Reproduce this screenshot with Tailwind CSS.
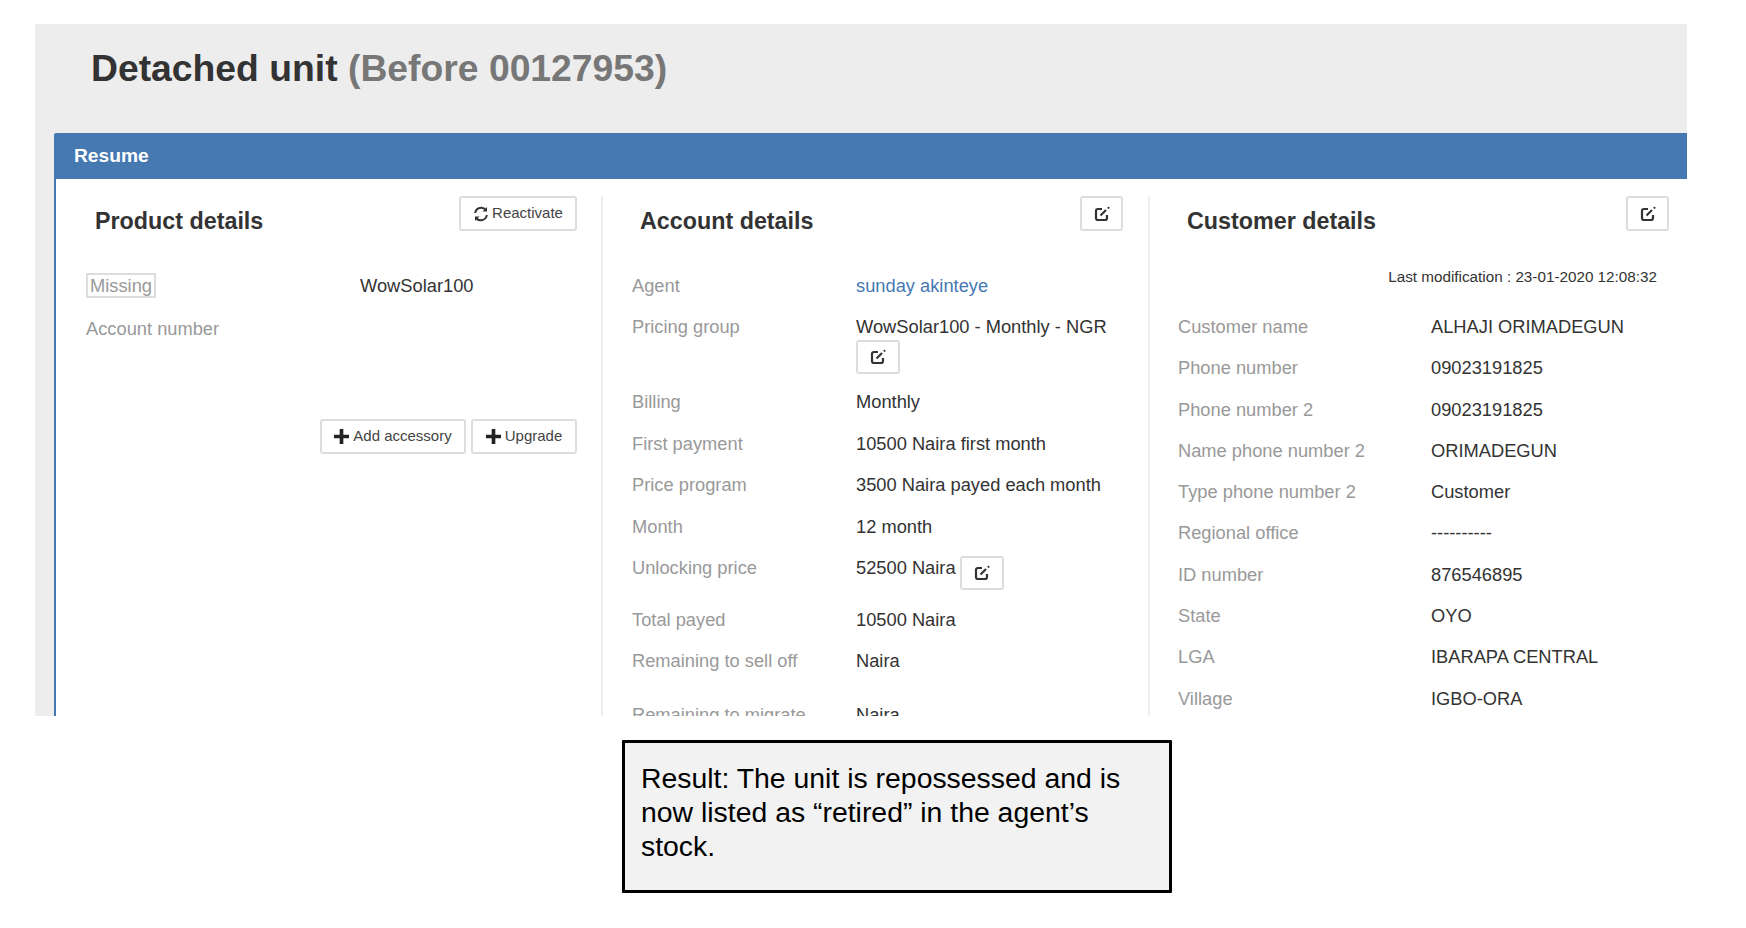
<!DOCTYPE html>
<html>
<head>
<meta charset="utf-8">
<script src="https://cdn.jsdelivr.net/npm/@tailwindcss/browser@4"></script>
</head>
<body class="bg-white font-['Liberation_Sans',Arial,sans-serif]">
<div class="w-[1746px] h-[928px] pt-[24px] pl-[35px] pr-[59px] overflow-hidden">
  <div class="h-[692px] bg-[#ededed] overflow-hidden pl-[19px]">
    <h1 class="h-[109px] pl-[37px] pt-[22px] text-[37.3px] leading-[44px] font-bold text-[#333]">Detached unit <span class="text-[#777]">(Before 00127953)</span></h1>
    <div class="h-[600px] bg-white border-l-2 border-[#4679b2] rounded-tl-[3px]">
      <div class="h-[46px] -ml-[2px] bg-[#4679b2] rounded-tl-[3px] pl-[20px] flex items-center text-white text-[19.2px] font-bold">Resume</div>
      <div class="grid grid-cols-[545px_547px_auto] pt-[17px] h-[537px] text-[18.3px]">

        <!-- Product -->
        <section class="pl-[30px] pr-[24px]">
          <div class="flex justify-between h-[77px] pl-[9px]">
            <h2 class="text-[23.3px] font-bold text-[#333] leading-[28px] pt-[11px]">Product details</h2>
            <button class="h-[35px] w-[118px] border-2 border-[#ddd] rounded-[3px] flex items-center justify-center gap-[3px] text-[15px] text-[#444]">
              <svg class="w-[16px] h-[16px]" viewBox="0 0 16 16" fill="none" stroke="#333" stroke-width="2"><path d="M2.200 7A6 6 0 0 1 13 4.200"/><path d="M13.800 9A6 6 0 0 1 3 11.800"/><path d="M14 1v4.500H9.500z" fill="#333" stroke="none"/><path d="M2 15v-4.500h4.500z" fill="#333" stroke="none"/></svg>
              Reactivate
            </button>
          </div>
          <div class="flex items-center h-[25px]">
            <span class="w-[274px] shrink-0"><span class="inline-block h-[25px] leading-[22px] border-2 border-[#ddd] px-[2px] text-[#999]">Missing</span></span>
            <span class="text-[#333]">WowSolar100</span>
          </div>
          <div class="mt-[19px] h-[24px] leading-[24px] text-[#999]">Account number</div>
          <div class="mt-[78px] flex justify-end gap-[5px]">
            <button class="h-[35px] w-[146px] border-2 border-[#ddd] rounded-[3px] flex items-center justify-center gap-[4px] text-[15px] text-[#444]">
              <svg class="w-[15px] h-[15px]" viewBox="0 0 14 14" fill="#222"><path d="M5.300 0h3.400v5.300H14v3.400H8.700V14H5.300V8.700H0V5.300h5.300z"/></svg>
              Add accessory
            </button>
            <button class="h-[35px] w-[106px] border-2 border-[#ddd] rounded-[3px] flex items-center justify-center gap-[4px] text-[15px] text-[#444]">
              <svg class="w-[15px] h-[15px]" viewBox="0 0 14 14" fill="#222"><path d="M5.300 0h3.400v5.300H14v3.400H8.700V14H5.300V8.700H0V5.300h5.300z"/></svg>
              Upgrade
            </button>
          </div>
        </section>

        <!-- Account -->
        <section class="border-l-2 border-[#eee] pl-[29px] pr-[25px] overflow-hidden">
          <div class="flex justify-between h-[78px] pl-[8px]">
            <h2 class="text-[23.3px] font-bold text-[#333] leading-[28px] pt-[11px]">Account details</h2>
            <button class="h-[35px] w-[43px] border-2 border-[#ddd] rounded-[3px] flex items-center justify-center">
              <svg class="w-[16px] h-[16px]" viewBox="0 0 16 16" fill="none" stroke="#333" stroke-width="2.200"><path d="M8 3H4a2 2 0 0 0-2 2v7a2 2 0 0 0 2 2h7a2 2 0 0 0 2-2V9"/><path d="M6.500 9.500L12 4"/><circle cx="14.500" cy="1.800" r="1.100" fill="#333" stroke="none"/></svg>
            </button>
          </div>
          <div class="flex h-[41px] leading-[24px]"><span class="w-[224px] text-[#999]">Agent</span><a class="text-[#4679b2]">sunday akinteye</a></div>
          <div class="flex h-[75px] leading-[24px]"><span class="w-[224px] shrink-0 text-[#999]">Pricing group</span>
            <div class="text-[#333]">WowSolar100 - Monthly - NGR
              <button class="h-[34px] w-[44px] mt-[1px] border-2 border-[#ddd] rounded-[3px] flex items-center justify-center">
                <svg class="w-[16px] h-[16px]" viewBox="0 0 16 16" fill="none" stroke="#333" stroke-width="2.200"><path d="M8 3H4a2 2 0 0 0-2 2v7a2 2 0 0 0 2 2h7a2 2 0 0 0 2-2V9"/><path d="M6.500 9.500L12 4"/><circle cx="14.500" cy="1.800" r="1.100" fill="#333" stroke="none"/></svg>
              </button>
            </div>
          </div>
          <div class="flex h-[41.500px] leading-[24px]"><span class="w-[224px] text-[#999]">Billing</span><span class="text-[#333]">Monthly</span></div>
          <div class="flex h-[41.500px] leading-[24px]"><span class="w-[224px] text-[#999]">First payment</span><span class="text-[#333]">10500 Naira first month</span></div>
          <div class="flex h-[41.500px] leading-[24px]"><span class="w-[224px] text-[#999]">Price program</span><span class="text-[#333]">3500 Naira payed each month</span></div>
          <div class="flex h-[41px] leading-[24px]"><span class="w-[224px] text-[#999]">Month</span><span class="text-[#333]">12 month</span></div>
          <div class="flex h-[52px] leading-[24px]"><span class="w-[224px] text-[#999]">Unlocking price</span><span class="text-[#333]">52500 Naira</span>
            <button class="h-[34px] w-[44px] ml-[4px] border-2 border-[#ddd] rounded-[3px] flex items-center justify-center">
              <svg class="w-[16px] h-[16px]" viewBox="0 0 16 16" fill="none" stroke="#333" stroke-width="2.200"><path d="M8 3H4a2 2 0 0 0-2 2v7a2 2 0 0 0 2 2h7a2 2 0 0 0 2-2V9"/><path d="M6.500 9.500L12 4"/><circle cx="14.500" cy="1.800" r="1.100" fill="#333" stroke="none"/></svg>
            </button>
          </div>
          <div class="flex h-[41px] leading-[24px]"><span class="w-[224px] text-[#999]">Total payed</span><span class="text-[#333]">10500 Naira</span></div>
          <div class="flex h-[54px] leading-[24px]"><span class="w-[224px] text-[#999]">Remaining to sell off</span><span class="text-[#333]">Naira</span></div>
          <div class="flex h-[41px] leading-[24px]"><span class="w-[224px] text-[#999]">Remaining to migrate</span><span class="text-[#333]">Naira</span></div>
        </section>

        <!-- Customer -->
        <section class="border-l-2 border-[#eee] pl-[28px] pr-[18px] overflow-hidden">
          <div class="flex justify-between h-[78px] pl-[9px]">
            <h2 class="text-[23.3px] font-bold text-[#333] leading-[28px] pt-[11px]">Customer details</h2>
            <button class="h-[35px] w-[43px] border-2 border-[#ddd] rounded-[3px] flex items-center justify-center">
              <svg class="w-[16px] h-[16px]" viewBox="0 0 16 16" fill="none" stroke="#333" stroke-width="2.200"><path d="M8 3H4a2 2 0 0 0-2 2v7a2 2 0 0 0 2 2h7a2 2 0 0 0 2-2V9"/><path d="M6.500 9.500L12 4"/><circle cx="14.500" cy="1.800" r="1.100" fill="#333" stroke="none"/></svg>
            </button>
          </div>
          <div class="h-[38px] pr-[12px] text-right text-[15.250px] leading-[20px] text-[#333] -mt-[7px] mb-[10px]">Last modification : 23-01-2020 12:08:32</div>
          <div class="flex h-[41.300px] leading-[24px]"><span class="w-[253px] text-[#999]">Customer name</span><span class="text-[#333]">ALHAJI ORIMADEGUN</span></div>
          <div class="flex h-[41.300px] leading-[24px]"><span class="w-[253px] text-[#999]">Phone number</span><span class="text-[#333]">09023191825</span></div>
          <div class="flex h-[41.300px] leading-[24px]"><span class="w-[253px] text-[#999]">Phone number 2</span><span class="text-[#333]">09023191825</span></div>
          <div class="flex h-[41.300px] leading-[24px]"><span class="w-[253px] text-[#999]">Name phone number 2</span><span class="text-[#333]">ORIMADEGUN</span></div>
          <div class="flex h-[41.300px] leading-[24px]"><span class="w-[253px] text-[#999]">Type phone number 2</span><span class="text-[#333]">Customer</span></div>
          <div class="flex h-[41.300px] leading-[24px]"><span class="w-[253px] text-[#999]">Regional office</span><span class="text-[#333]">----------</span></div>
          <div class="flex h-[41.300px] leading-[24px]"><span class="w-[253px] text-[#999]">ID number</span><span class="text-[#333]">876546895</span></div>
          <div class="flex h-[41.300px] leading-[24px]"><span class="w-[253px] text-[#999]">State</span><span class="text-[#333]">OYO</span></div>
          <div class="flex h-[41.300px] leading-[24px]"><span class="w-[253px] text-[#999]">LGA</span><span class="text-[#333]">IBARAPA CENTRAL</span></div>
          <div class="flex h-[41.300px] leading-[24px]"><span class="w-[253px] text-[#999]">Village</span><span class="text-[#333]">IGBO-ORA</span></div>
        </section>
      </div>
    </div>
  </div>
  <div class="mt-[24px] ml-[587px] w-[550px] h-[153px] bg-[#f2f2f2] border-[3px] border-black rounded-[1px] pl-[16px] pr-[20px] pt-[18px] text-[28.400px] leading-[34px] text-black">Result: The unit is repossessed and is now listed as “retired” in the agent’s stock.</div>
</div>
</body>
</html>
